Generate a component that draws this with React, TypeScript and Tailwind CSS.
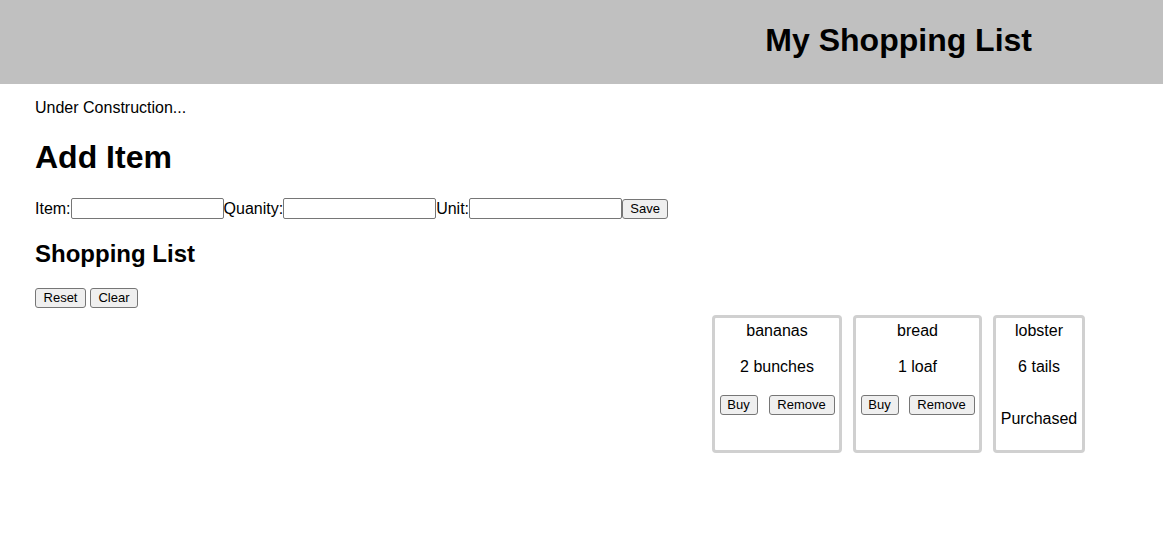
const items = [
  { name: "bananas", qty: "2 bunches", bought: false, w: "w-[130px]", gap: "gap-[11px]" },
  { name: "bread", qty: "1 loaf", bought: false, w: "w-[129px]", gap: "gap-[10px]" },
  { name: "lobster", qty: "6 tails", bought: true, w: "w-[92px]", gap: "gap-[10px]" },
];

const btn =
  "h-[20px] border border-[#767676] rounded-[3px] bg-[#efefef] text-[13px] leading-[18px] text-black text-center";

function Field({ label }: { label: string }) {
  return (
    <>
      <span>{label}</span>
      <input className="w-[153px] h-[21px] border border-[#767676] rounded-[2px] bg-white" />
    </>
  );
}

export default function App() {
  return (
    <div className="min-h-screen bg-white text-black font-['Liberation_Sans',Arial,sans-serif]">
      {/* Header */}
      <header className="w-[1163px] h-[84px] bg-[#c0c0c0] flex items-center justify-end pr-[131px]">
        <h1 className="text-[32px] leading-[37px] font-bold -mt-[4px]">My Shopping List</h1>
      </header>

      <main className="pl-[35px] flex flex-col items-start">
        <p className="mt-[15px] text-[16px] leading-[18px]">Under Construction...</p>

        <h1 className="mt-[22px] text-[32px] leading-[37px] font-bold">Add Item</h1>

        <div className="mt-[22px] flex items-center text-[16px] leading-[18px]">
          <Field label="Item:" />
          <Field label="Quanity:" />
          <Field label="Unit:" />
          <button className={`${btn} w-[46px]`}>Save</button>
        </div>

        <h2 className="mt-[21px] text-[24px] leading-[28px] font-bold">Shopping List</h2>

        <div className="mt-[20px] flex gap-[4px]">
          <button className={`${btn} w-[51px]`}>Reset</button>
          <button className={`${btn} w-[48px]`}>Clear</button>
        </div>

        {/* Cards */}
        <div className="mt-[7px] pl-[677px] flex gap-[11px]">
          {items.map((it) => (
            <div
              key={it.name}
              className={`${it.w} h-[138px] border-[3px] border-[#d0d0d0] rounded-[4px] flex flex-col items-center text-[16px] leading-[18px]`}
            >
              <p className="mt-[4px]">{it.name}</p>
              <p className="mt-[18px]">{it.qty}</p>
              {it.bought ? (
                <p className="mt-[34px]">Purchased</p>
              ) : (
                <div className={`mt-[19px] flex ${it.gap}`}>
                  <button className={`${btn} w-[38px]`}>Buy</button>
                  <button className={`${btn} w-[66px]`}>Remove</button>
                </div>
              )}
            </div>
          ))}
        </div>
      </main>
    </div>
  );
}
